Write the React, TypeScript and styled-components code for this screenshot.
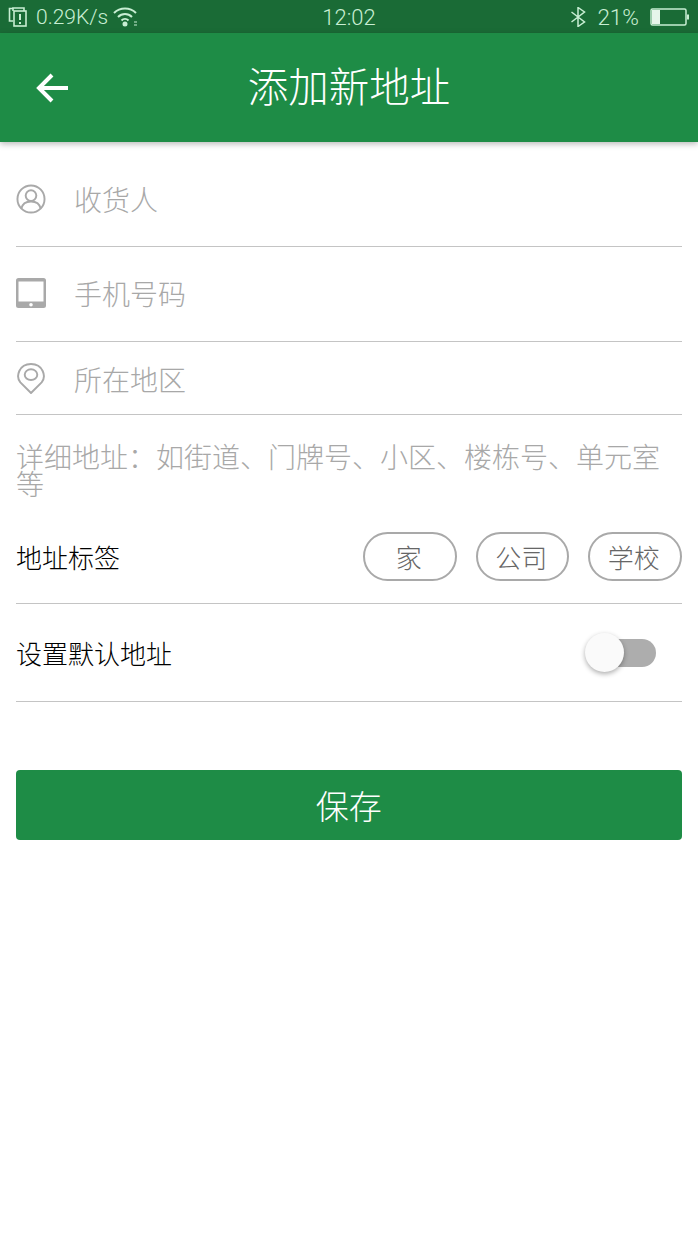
import React from 'react';
import styled, { createGlobalStyle } from 'styled-components';

const GlobalStyle = createGlobalStyle`
  html, body {
    margin: 0;
    padding: 0;
    background: #ffffff;
  }
  body {
    font-family: Roboto, "Noto Sans CJK SC", sans-serif;
  }
`;

const Page = styled.div`
  width: 698px;
  height: 1244px;
  background: #fff;
  overflow: hidden;
`;

const StatusBar = styled.div`
  height: 33px;
  box-sizing: border-box;
  padding: 0 8px;
  background: #1a6b36;
  color: #c8eed3;
  display: grid;
  grid-template-columns: 1fr auto 1fr;
  align-items: center;
  font-size: 21px;
  font-weight: 300;
`;

const StatusGroup = styled.div<{ $end?: boolean }>`
  display: flex;
  align-items: center;
  justify-content: ${(p) => (p.$end ? 'flex-end' : 'flex-start')};
  gap: ${(p) => (p.$end ? '11px' : '8px')};
`;

const Clock = styled.span`
  font-size: 22px;
  padding-top: 1px;
`;

const BatteryText = styled.span`
  font-size: 22.500px;
  padding-top: 1px;
`;

const Header = styled.header`
  height: 109px;
  background: #1e8c46;
  display: flex;
  align-items: center;
  justify-content: center;
  position: relative;
  box-shadow: 0 2px 6px rgba(0, 0, 0, 0.28);
`;

const BackButton = styled.button`
  position: absolute;
  left: 35px;
  top: 39px;
  width: 34px;
  height: 32px;
  padding: 0;
  border: 0;
  background: none;
  color: #fff;
`;

const Title = styled.h1`
  margin: 0 0 4px;
  color: #fff;
  font-family: "Noto Sans CJK SC", sans-serif;
  font-size: 40.500px;
  font-weight: 300;
  line-height: 1;
`;

const Form = styled.form`
  padding: 0 16.500px 0 16px;
  font-family: "Noto Sans CJK SC", sans-serif;
`;

const InputRow = styled.div<{ $h: number; $top?: number; $bottom?: number }>`
  height: ${(p) => p.$h}px;
  box-sizing: border-box;
  padding-top: ${(p) => p.$top ?? 0}px;
  padding-bottom: ${(p) => p.$bottom ?? 0}px;
  border-bottom: 1.500px solid #c4c4c4;
  display: flex;
  align-items: center;
  gap: 28px;
`;

const IconSlot = styled.span`
  width: 30px;
  height: 34px;
  display: flex;
  align-items: center;
  justify-content: center;
  flex-shrink: 0;
`;

const Placeholder = styled.span`
  color: #a8a8a8;
  font-size: 28px;
  font-weight: 300;
  line-height: 1;
`;

const AddressHint = styled.div`
  padding-top: 28px;
  height: 84px;
  box-sizing: border-box;
  color: #a8a8a8;
  font-size: 28px;
  font-weight: 300;
  line-height: 27px;
`;

const SettingRow = styled.div<{ $h: number; $top?: number }>`
  height: ${(p) => p.$h}px;
  box-sizing: border-box;
  padding-top: ${(p) => p.$top ?? 0}px;
  border-bottom: 1.500px solid #c4c4c4;
  display: flex;
  align-items: center;
  justify-content: space-between;
`;

const Label = styled.span`
  color: #000;
  font-size: 26px;
  font-weight: 300;
`;

const TagList = styled.div`
  display: flex;
  gap: 19px;
`;

const Tag = styled.span`
  width: 93.500px;
  height: 49px;
  box-sizing: border-box;
  padding-right: 2px;
  border: 2px solid #a9a9a9;
  border-radius: 25px;
  display: flex;
  align-items: center;
  justify-content: center;
  color: #666;
  font-size: 26px;
  font-weight: 300;
`;

const Switch = styled.div`
  position: relative;
  width: 52px;
  height: 28px;
  margin-right: 25.500px;
  border-radius: 14px;
  background: #adadad;
`;

const Knob = styled.span`
  position: absolute;
  left: -19px;
  top: -6px;
  width: 39px;
  height: 39px;
  border-radius: 50%;
  background: #fafafa;
  box-shadow: 0 2px 5px rgba(0, 0, 0, 0.32);
`;

const SaveButton = styled.button`
  display: block;
  width: 100%;
  height: 70px;
  margin-top: 68px;
  border: 0;
  border-radius: 4px;
  background: #1e8c46;
  color: #fff;
  font-family: "Noto Sans CJK SC", sans-serif;
  font-size: 33px;
  font-weight: 300;
`;

export default function App() {
  return (
    <Page>
      <GlobalStyle />
      <StatusBar>
        <StatusGroup>
          <svg width="20" height="22" viewBox="0 0 20 22" fill="none" stroke="#c8eed3" strokeWidth="1.6">
            <path d="M5 5V2h8l3 0v3" />
            <path d="M5 15H1.500V2.500H5" />
            <rect x="6" y="5" width="12" height="15" />
            <path d="M12 8v6M12 16v2" strokeWidth="2" />
          </svg>
          <span>0.29K/s</span>
          <svg width="26" height="22" viewBox="0 0 26 22" fill="none" stroke="#c8eed3" strokeWidth="2" style={{ marginLeft: -3 }}>
            <path d="M1 7c6-6 16-6 22 0" />
            <path d="M5 11c4-4 10-4 14 0" />
            <path d="M8.500 14.500c2-2 5-2 7 0" />
            <circle cx="12" cy="18" r="1.500" fill="#c8eed3" />
            <path d="M21 16h3M21 19h3" strokeWidth="1.200" />
          </svg>
        </StatusGroup>
        <Clock>12:02</Clock>
        <StatusGroup $end>
          <svg width="16" height="20" viewBox="0 0 16 20" fill="none" stroke="#c8eed3" strokeWidth="1.500">
            <path d="M1.500 5l13 10-6.500 4.500V.5l6.500 4.500-13 10" />
          </svg>
          <BatteryText>21%</BatteryText>
          <svg width="40" height="20" viewBox="0 0 40 20" fill="none">
            <rect x="1" y="2" width="35" height="16" rx="1.500" stroke="#c8eed3" strokeWidth="1.500" />
            <rect x="2" y="3" width="8" height="14" fill="#e6f5ea" />
            <rect x="37" y="7.500" width="2" height="5" fill="#c8eed3" />
          </svg>
        </StatusGroup>
      </StatusBar>
      <Header>
        <BackButton aria-label="back">
          <svg width="34" height="32" viewBox="0 0 34 32" fill="none" stroke="#fff" strokeWidth="4">
            <path d="M33 16H5" />
            <path d="M17 3L4 16l13 13" />
          </svg>
        </BackButton>
        <Title>添加新地址</Title>
      </Header>
      <Form>
        <InputRow $h={105} $top={9}>
          <IconSlot>
            <svg width="30" height="30" viewBox="0 0 31 31" fill="none" stroke="#a9a9a9" strokeWidth="2">
              <circle cx="15.500" cy="15.500" r="14" />
              <circle cx="15.500" cy="12" r="5.500" />
              <path d="M5.500 25.500c1-5 5-7.500 10-7.500s9 2.500 10 7.500" />
            </svg>
          </IconSlot>
          <Placeholder>收货人</Placeholder>
        </InputRow>
        <InputRow $h={95} $bottom={2}>
          <IconSlot>
            <svg width="30" height="30" viewBox="0 0 30 30">
              <path
                fill="#a9a9a9"
                fillRule="evenodd"
                d="M2.500 0h25A2.500 2.500 0 0 1 30 2.500v25a2.500 2.500 0 0 1-2.500 2.500h-25A2.500 2.500 0 0 1 0 27.500v-25A2.500 2.500 0 0 1 2.500 0zM2.500 3.500v20h25v-20zM15 25a1.800 1.800 0 1 0 0 3.600A1.800 1.800 0 0 0 15 25z"
              />
            </svg>
          </IconSlot>
          <Placeholder>手机号码</Placeholder>
        </InputRow>
        <InputRow $h={73} $top={1}>
          <IconSlot>
            <svg width="30" height="33" viewBox="0 0 31 33" fill="none" stroke="#a9a9a9" strokeWidth="2">
              <path d="M15.500 31.500L4.500 20.500C-.5 14.500 3 1.500 15.500 1.500S31.500 14.500 26.500 20.500z" strokeLinejoin="round" />
              <ellipse cx="15.500" cy="12.500" rx="6.500" ry="5.500" />
            </svg>
          </IconSlot>
          <Placeholder>所在地区</Placeholder>
        </InputRow>
        <AddressHint>{'详细地址\uFF1A如街道、门牌号、小区、楼栋号、单元室等'}</AddressHint>
        <SettingRow $h={105} $top={10}>
          <Label>地址标签</Label>
          <TagList>
            <Tag>家</Tag>
            <Tag>公司</Tag>
            <Tag>学校</Tag>
          </TagList>
        </SettingRow>
        <SettingRow $h={98}>
          <Label>设置默认地址</Label>
          <Switch>
            <Knob />
          </Switch>
        </SettingRow>
        <SaveButton type="button">保存</SaveButton>
      </Form>
    </Page>
  );
}
